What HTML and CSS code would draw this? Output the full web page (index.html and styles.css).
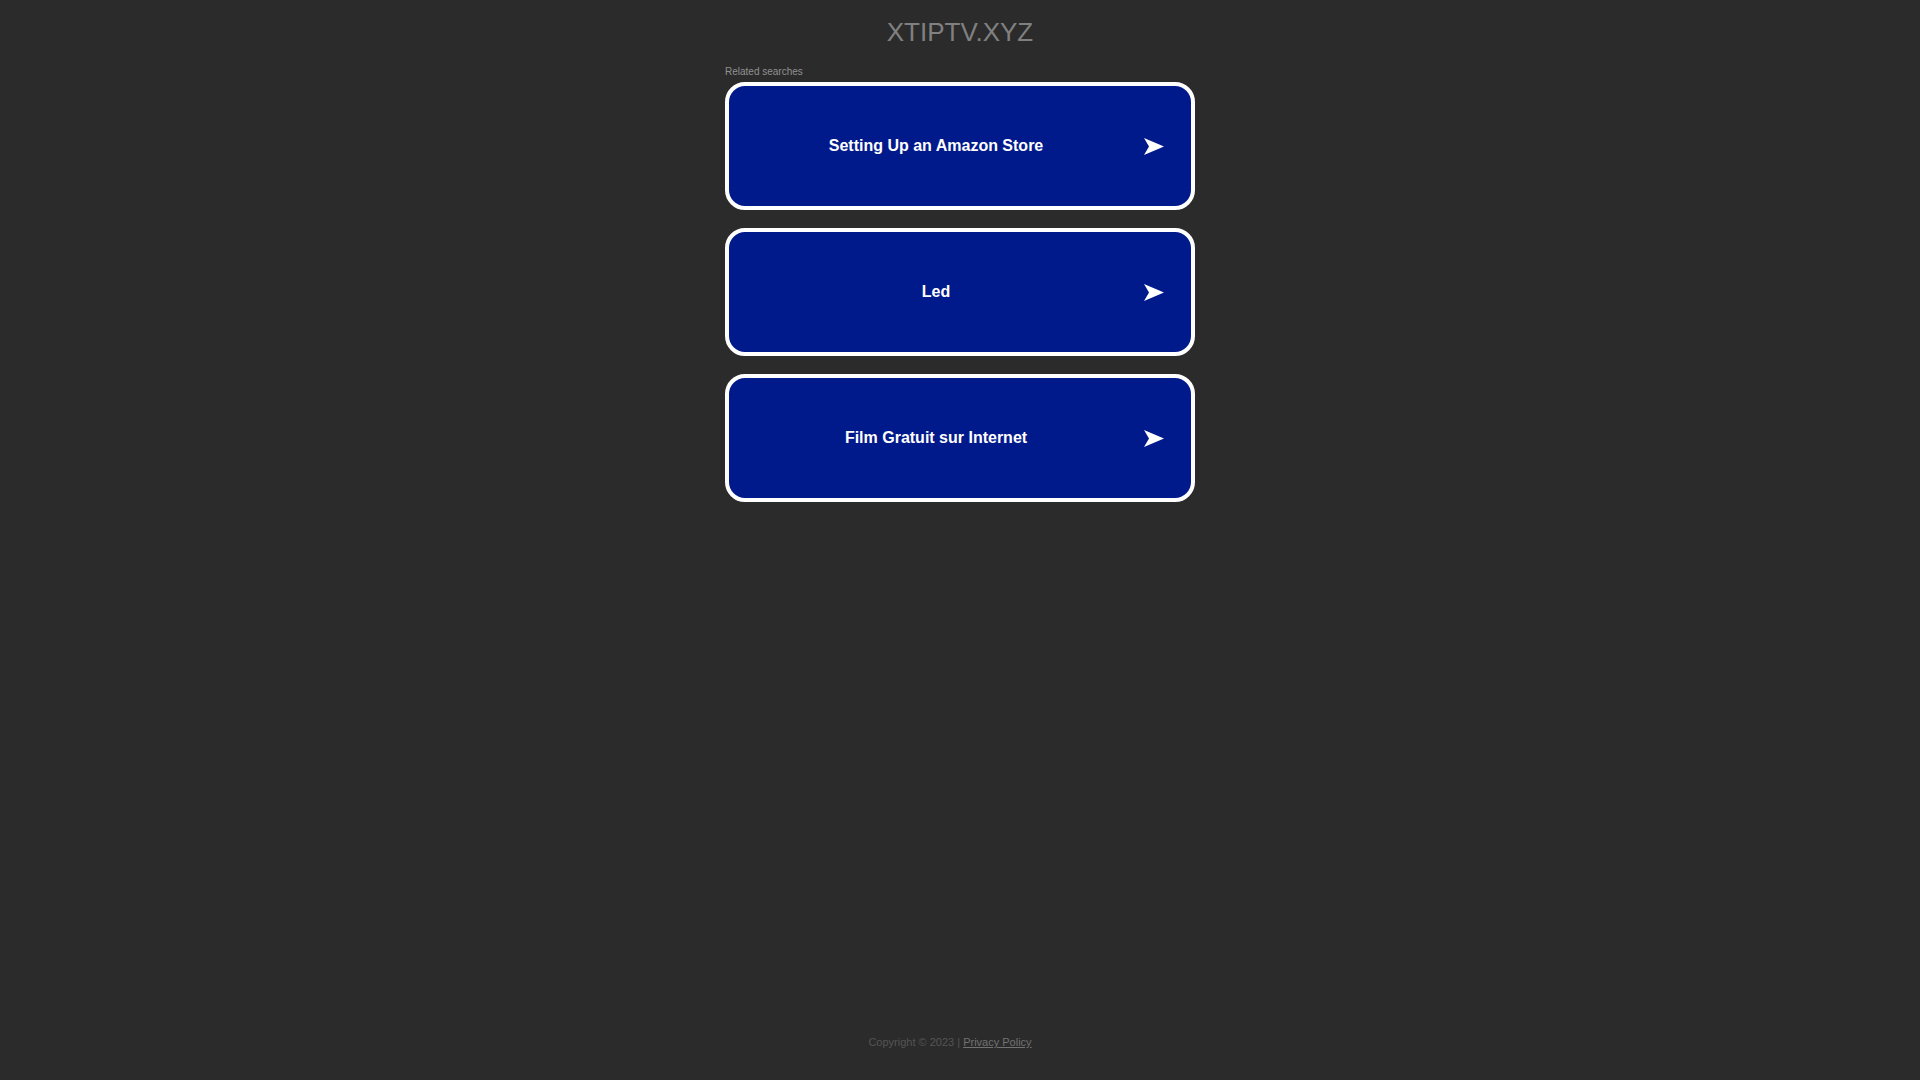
FILE: index.html
```html
<!DOCTYPE html>
<html lang="en">
<head>
<meta charset="utf-8">
<title>xtiptv.xyz</title>
<link rel="stylesheet" href="styles.css">
</head>
<body>
<div class="page">
  <header class="header">
    <h1 class="domain">XTIPTV.XYZ</h1>
  </header>
  <main class="content">
    <div class="related-label">Related searches</div>
    <ul class="links">
      <li><a class="link" href="#"><span class="link-text">Setting Up an Amazon Store</span><svg class="arrow" viewBox="0 0 20 17"><polygon points="0,0 20,8.5 0,17 5,8.5" fill="#fff"/></svg></a></li>
      <li><a class="link" href="#"><span class="link-text">Led</span><svg class="arrow" viewBox="0 0 20 17"><polygon points="0,0 20,8.5 0,17 5,8.5" fill="#fff"/></svg></a></li>
      <li><a class="link" href="#"><span class="link-text">Film Gratuit sur Internet</span><svg class="arrow" viewBox="0 0 20 17"><polygon points="0,0 20,8.5 0,17 5,8.5" fill="#fff"/></svg></a></li>
    </ul>
  </main>
  <footer class="footer">Copyright © 2023 | <a class="footer-link" href="#">Privacy Policy</a></footer>
</div>
</body>
</html>
```

FILE: styles.css
```css
html, body {
  margin: 0;
  padding: 0;
  height: 100%;
}
body {
  background: #2b2b2b;
  font-family: "Liberation Sans", Arial, sans-serif;
}
.page {
  min-height: 100vh;
  display: flex;
  flex-direction: column;
  align-items: center;
}
.header {
  padding-top: 17px;
}
.domain {
  margin: 0;
  font-size: 26px;
  font-weight: normal;
  color: #808080;
  line-height: 30px;
  text-align: center;
}
.content {
  width: 470px;
  margin-top: 19px;
}
.related-label {
  font-size: 10px;
  line-height: 12px;
  color: #919191;
}
.links {
  list-style: none;
  margin: 4px 0 0 0;
  padding: 0;
  display: flex;
  flex-direction: column;
  gap: 18px;
}
.link {
  box-sizing: border-box;
  height: 128px;
  display: flex;
  align-items: center;
  padding-left: 20px;
  background: #011a8b;
  border: 4px solid #fff;
  border-radius: 20px;
  text-decoration: none;
  color: #fff;
}
.link-text {
  flex: 1;
  text-align: center;
  font-size: 16px;
  font-weight: bold;
}
.arrow {
  width: 20px;
  height: 17px;
  margin-left: 21px;
  margin-right: 27px;
  flex: none;
}
.footer {
  margin-top: auto;
  padding-right: 20px;
  padding-bottom: 31px;
  font-size: 11px;
  line-height: 13px;
  color: #555;
}
.footer-link {
  color: #727272;
  text-decoration: underline;
}
```
